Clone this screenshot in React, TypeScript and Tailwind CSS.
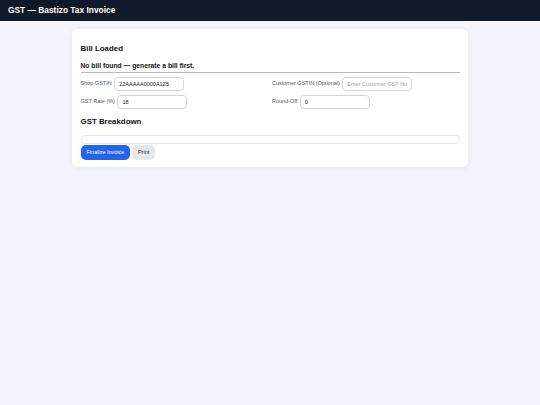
const fieldLabel = "shrink-0 text-[5.5px] leading-[7px] text-[#4b5563]";
const fieldInput =
  "h-[13.5px] w-[70px] rounded-[4px] border border-[#d1d5db] bg-white px-[4px] text-[5.5px] text-[#111827] outline-none placeholder:text-[#9ca3af]";

const Field = ({
  label,
  value,
  placeholder,
}: {
  label: string;
  value?: string;
  placeholder?: string;
}) => (
  <div className="flex items-center gap-[2.5px]">
    <label className={fieldLabel}>{label}</label>
    <input className={fieldInput} defaultValue={value} placeholder={placeholder} />
  </div>
);

export default function App() {
  return (
    <div className="min-h-screen bg-[#f4f5fc] font-['Liberation_Sans',Arial,sans-serif]">
      <header className="flex h-[21px] items-center bg-[#111827] px-[8px]">
        <h1 className="text-[8.4px] font-bold leading-none text-white">GST — Bastizo Tax Invoice</h1>
      </header>

      <main className="pt-[8px]">
        <div className="mx-auto w-[396px] rounded-[6px] bg-white px-[8.5px] pb-[7.5px] pt-[14.5px] shadow-[0_1px_6px_rgba(15,23,42,0.08)]">
          <h3 className="text-[7.9px] font-bold leading-[9px] text-[#111]">Bill Loaded</h3>
          <p className="mt-[9px] text-[6.75px] font-bold leading-[8px] text-[#111]">
            No bill found — generate a bill first.
          </p>
          <div className="mt-[2.5px] border-t-[1.5px] border-[#b9b9b9]" />

          <div className="mt-[4px] grid grid-cols-2 gap-x-[4px] gap-y-[4.5px]">
            <Field label="Shop GSTIN" value="22AAAAA0000A1Z5" />
            <Field label="Customer GSTIN (Optional)" placeholder="Enter Customer GST Number" />
            <Field label="GST Rate (%)" value="18" />
            <Field label="Round-Off" value="0" />
          </div>

          <h3 className="mt-[8px] text-[7.9px] font-bold leading-[9px] text-[#111]">GST Breakdown</h3>
          <div className="mt-[9px] h-[9px] rounded-[4px] border border-[#e5e7eb]" />

          <div className="mt-[1px] flex gap-[1.5px]">
            <button className="h-[15px] rounded-[5px] bg-[#2563eb] px-[6px] text-[5.5px] text-white">
              Finalize Invoice
            </button>
            <button className="h-[15px] rounded-[5px] bg-[#e5e7eb] px-[6px] text-[5.5px] text-[#111827]">
              Print
            </button>
          </div>
        </div>
      </main>
    </div>
  );
}
